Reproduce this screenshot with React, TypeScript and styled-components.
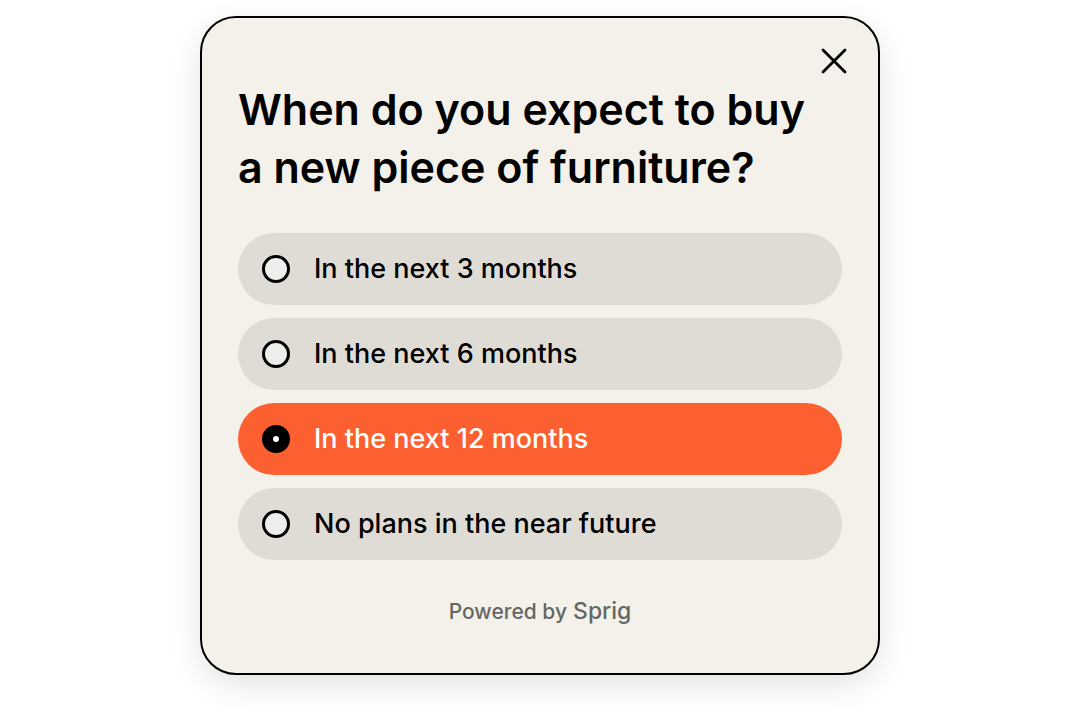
import { useState } from "react";
import styled, { createGlobalStyle } from "styled-components";

const GlobalStyle = createGlobalStyle`
  *, *::before, *::after { box-sizing: border-box; }
  body {
    margin: 0;
    background: #ffffff;
    color: #000000;
    font-family: Inter, "Liberation Sans", sans-serif;
  }
`;

const Page = styled.main`
  display: flex;
  justify-content: center;
  padding: 16px 16px 48px;
`;

const Card = styled.form`
  display: flex;
  flex-direction: column;
  width: 100%;
  max-width: 680px;
  padding: 29px 36px 47px;
  border: 2px solid #000000;
  border-radius: 36px;
  background: #f4f1ea;
  box-shadow: 0 10px 32px rgba(0, 0, 0, 0.11);
`;

const CloseButton = styled.button`
  display: flex;
  align-self: flex-end;
  margin-right: -6px;
  padding: 0;
  border: 0;
  background: none;
  color: inherit;
  cursor: pointer;
`;

const Question = styled.h1`
  margin: 5px 0 37px;
  padding-right: 32px;
  font-size: 43px;
  font-weight: 600;
  line-height: 58px;
`;

const Options = styled.div`
  display: flex;
  flex-direction: column;
  gap: 13px;
`;

const Option = styled.label<{ $selected: boolean }>`
  display: flex;
  align-items: center;
  gap: 24px;
  min-height: 72px;
  padding: 0 24px;
  border-radius: 36px;
  background: ${({ $selected }) => ($selected ? "#fc6030" : "#dfdcd5")};
  color: ${({ $selected }) => ($selected ? "#ffffff" : "#000000")};
  font-size: 27px;
  font-weight: 500;
  line-height: 36px;
  cursor: pointer;
`;

const Radio = styled.input`
  appearance: none;
  flex: none;
  width: 28px;
  height: 28px;
  margin: 0;
  border: 3px solid #000000;
  border-radius: 50%;
  background: #eeeeec;
  cursor: pointer;

  &:checked {
    border-width: 11px;
    background: #ffffff;
  }
`;

const Footer = styled.footer`
  display: flex;
  justify-content: center;
  align-items: baseline;
  gap: 6px;
  margin-top: 37px;
  color: #646765;
  font-size: 21px;
  font-weight: 500;
  line-height: 28px;
`;

const Brand = styled.span`
  font-size: 23px;
`;

const answers = [
  "In the next 3 months",
  "In the next 6 months",
  "In the next 12 months",
  "No plans in the near future",
];

export default function App() {
  const [selected, setSelected] = useState(answers[2]);

  return (
    <>
      <GlobalStyle />
      <Page>
        <Card>
          <CloseButton type="button" aria-label="Close">
            <svg width="28" height="28" viewBox="0 0 28 28" fill="none" stroke="currentColor" strokeWidth="2.8" strokeLinecap="round" aria-hidden="true">
              <path d="M3 3 25 25M25 3 3 25" />
            </svg>
          </CloseButton>
          <Question id="question">When do you expect to buy a new piece of furniture?</Question>
          <Options role="radiogroup" aria-labelledby="question">
            {answers.map((answer) => (
              <Option key={answer} $selected={selected === answer}>
                <Radio
                  type="radio"
                  name="answer"
                  value={answer}
                  checked={selected === answer}
                  onChange={() => setSelected(answer)}
                />
                {answer}
              </Option>
            ))}
          </Options>
          <Footer>
            <span>Powered by</span>
            <Brand>Sprig</Brand>
          </Footer>
        </Card>
      </Page>
    </>
  );
}
